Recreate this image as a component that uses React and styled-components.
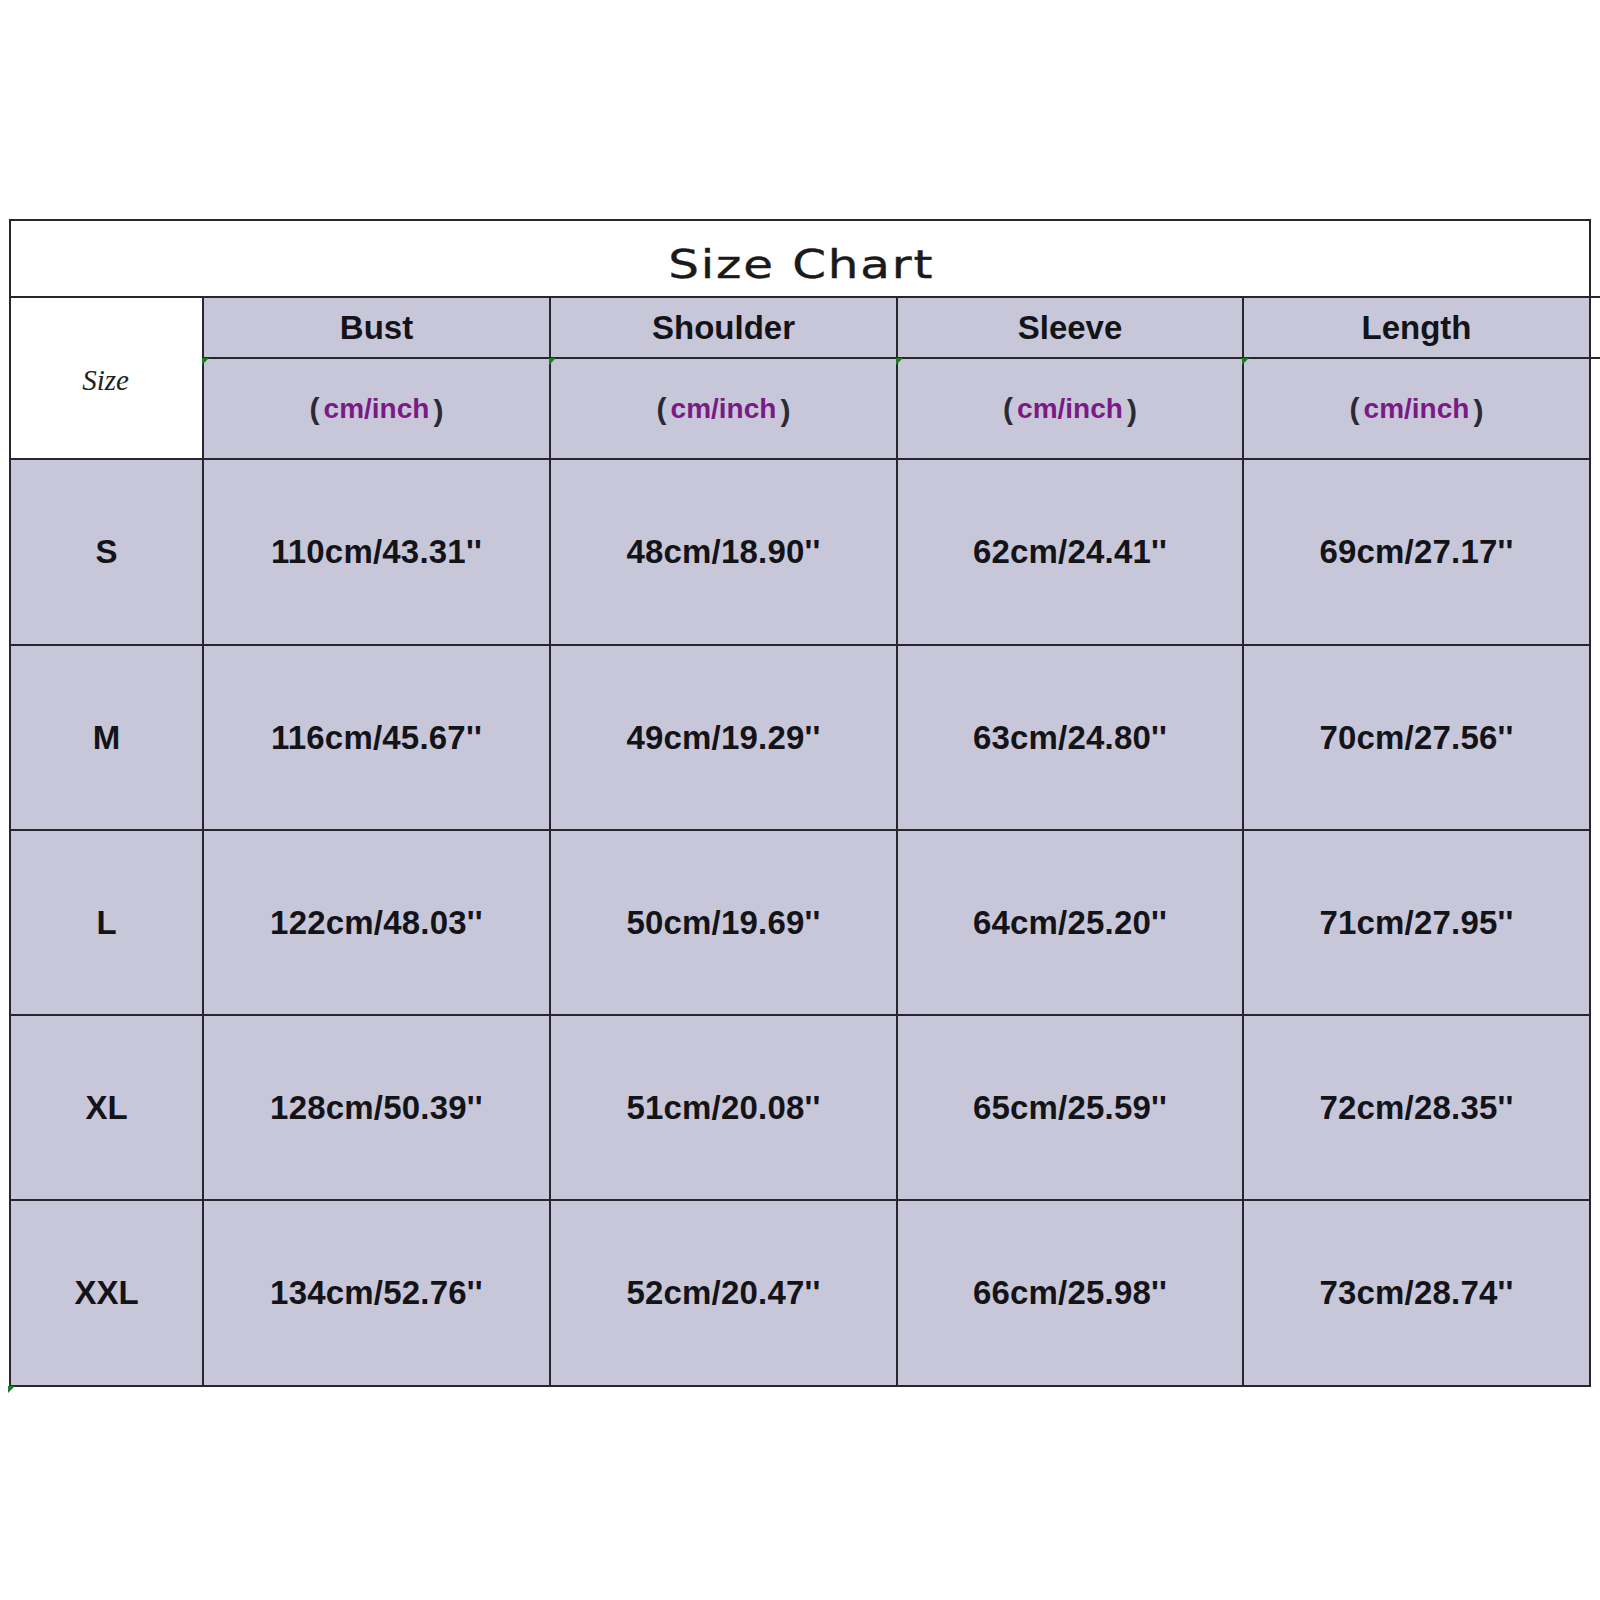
import React from "react";
import styled, { createGlobalStyle } from "styled-components";

const GlobalStyle = createGlobalStyle`
  html, body {
    margin: 0;
    padding: 0;
    background: #fff;
  }
`;

const Page = styled.div`
  width: 1600px;
  height: 1600px;
  padding: 219px 0 0 9px;
  box-sizing: border-box;
  background: #fff;
  overflow: hidden;
`;

const Table = styled.div`
  position: relative;
  width: 1582px;
  box-sizing: border-box;
  display: grid;
  grid-template-columns: 191px 345px 345px 344px 345px;
  grid-template-rows: 75px 59px 99px 184px 183px 183px 183px 184px;
  gap: 2px;
  background: #26262c;
  border: 2px solid #26262c;
  font-family: "Liberation Sans", Arial, sans-serif;
  color: #111;

  &::after {
    content: "";
    position: absolute;
    left: -3px;
    bottom: -8px;
    border-style: solid;
    border-width: 7px 7px 0 0;
    border-color: #1f7a26 transparent transparent transparent;
  }
`;

const Title = styled.div`
  grid-column: 1 / -1;
  background: #fff;
  display: flex;
  align-items: center;
  justify-content: center;
  padding: 12px 0 0 2px;
`;

const TitleText = styled.span`
  display: inline-block;
  font-family: "DejaVu Sans", sans-serif;
  font-size: 39px;
  letter-spacing: 1.5px;
  color: #1a1a1a;
  transform: scaleX(1.24);
  -webkit-text-stroke: 0.4px #1a1a1a;
`;

const SizeHead = styled.div`
  grid-row: 2 / span 2;
  background: #fff;
  display: flex;
  align-items: center;
  justify-content: center;
  padding: 4px 2px 0 0;
  font-family: "Liberation Serif", "Times New Roman", serif;
  font-style: italic;
  font-size: 29px;
  color: #222;
`;

const Cell = styled.div`
  position: relative;
  background: #c8c7da;
  display: flex;
  align-items: center;
  justify-content: center;
  font-weight: 700;
  font-size: 33px;
  color: #141418;
  letter-spacing: ${(p) => (p.$data ? "0.2px" : "0")};

  ${(p) =>
    p.$extend &&
    `
    &::after {
      content: "";
      position: absolute;
      right: -13px;
      bottom: -2px;
      width: 11px;
      height: 2px;
      background: #26262c;
    }
    &::before {
      content: "";
      position: absolute;
      right: -13px;
      top: -2px;
      width: 11px;
      height: 2px;
      background: #26262c;
    }
  `}
`;

const UnitCell = styled(Cell)`
  font-size: 28px;
  gap: 4px;

  &::before {
    content: "";
    position: absolute;
    left: -2px;
    top: -1px;
    border-style: solid;
    border-width: 7px 7px 0 0;
    border-color: #1f7a26 transparent transparent transparent;
  }
`;

const Paren = styled.span`
  font-family: "Liberation Sans", Arial, sans-serif;
  font-weight: 700;
  font-size: 30px;
  color: #2a2a35;
  transform: ${(p) => (p.$close ? "translateY(2px)" : "none")};
`;

const Unit = styled.span`
  color: #7b1a84;
`;

const headers = ["Bust", "Shoulder", "Sleeve", "Length"];

const rows = [
  ["S", "110cm/43.31''", "48cm/18.90''", "62cm/24.41''", "69cm/27.17''"],
  ["M", "116cm/45.67''", "49cm/19.29''", "63cm/24.80''", "70cm/27.56''"],
  ["L", "122cm/48.03''", "50cm/19.69''", "64cm/25.20''", "71cm/27.95''"],
  ["XL", "128cm/50.39''", "51cm/20.08''", "65cm/25.59''", "72cm/28.35''"],
  ["XXL", "134cm/52.76''", "52cm/20.47''", "66cm/25.98''", "73cm/28.74''"],
];

const App = () => {
  return (
    <Page>
      <GlobalStyle />
      <Table>
        <Title>
          <TitleText>Size Chart</TitleText>
        </Title>
        <SizeHead>Size</SizeHead>
        {headers.map((h, i) => (
          <Cell key={h} $extend={i === headers.length - 1}>
            {h}
          </Cell>
        ))}
        {headers.map((h) => (
          <UnitCell key={h + "-unit"}>
            <Paren>(</Paren>
            <Unit>cm/inch</Unit>
            <Paren $close>)</Paren>
          </UnitCell>
        ))}
        {rows.map((row) =>
          row.map((value, i) => (
            <Cell key={row[0] + i} $data={i > 0}>
              {value}
            </Cell>
          ))
        )}
      </Table>
    </Page>
  );
};

export default App;
